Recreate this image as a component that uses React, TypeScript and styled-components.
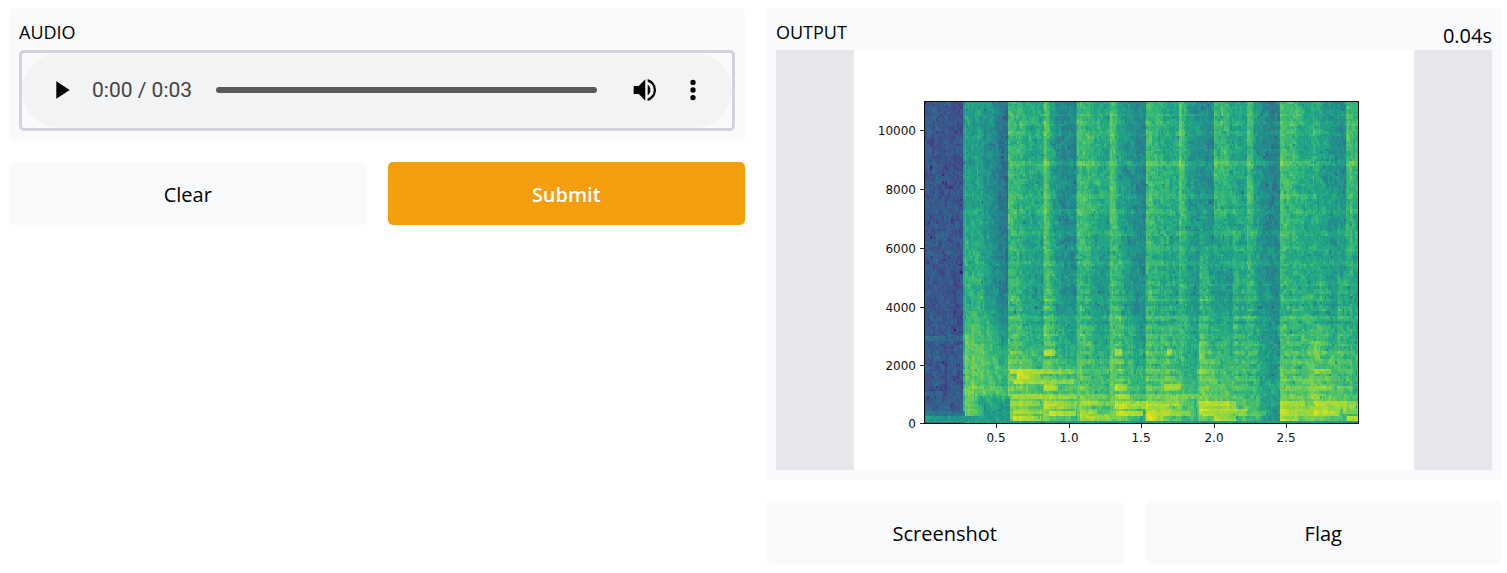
import React, { useState } from "react";
import styled, { createGlobalStyle } from "styled-components";

const GlobalStyle = createGlobalStyle`
  *, *::before, *::after { box-sizing: border-box; }
  body {
    margin: 0;
    background: #fff;
    color: #000;
    font-family: "Segoe UI", "Open Sans", "Noto Sans", sans-serif;
    font-size: 20px;
    line-height: 32px;
  }
`;

const Page = styled.main`
  display: grid;
  grid-template-columns: 1fr 1fr;
  align-items: start;
  gap: 21px;
  padding: 8px 5px 8px 9px;
`;

const Column = styled.div`
  display: flex;
  flex-direction: column;
  gap: 21px;
  min-width: 0;
`;

const Card = styled.section`
  padding: 10px;
  border-radius: 5px;
  background: #f9fafb;
`;

const CardHeader = styled.header`
  display: flex;
  justify-content: space-between;
  height: 32px;
`;

const CardTitle = styled.h2`
  margin: 0;
  font-size: 18px;
  font-weight: 500;
  line-height: 28px;
  text-transform: uppercase;
`;

const Duration = styled.span`
  font-size: 20px;
  line-height: 36px;
`;

const PlayerFrame = styled.div`
  border: 3px solid #d2d3dc;
  border-radius: 5px;
`;

const Player = styled.div`
  display: flex;
  align-items: center;
  height: 75px;
  padding: 0 15px 1px 17px;
  border-radius: 38px;
  background: #f1f3f4;
`;

const IconButton = styled.button`
  display: grid;
  place-items: center;
  flex: none;
  width: 48px;
  height: 48px;
  padding: 0;
  border: 0;
  background: none;
  color: #000;
  cursor: pointer;
`;

const Time = styled.span`
  flex: none;
  margin: 0 24px 0 5px;
  color: #444;
  font-family: Roboto, sans-serif;
  font-size: 21px;
`;

const Seek = styled.input`
  flex: 1;
  min-width: 0;
  height: 6px;
  margin: 0 24px 0 0;
  border-radius: 3px;
  appearance: none;
  background: #5a5a5a;
  cursor: pointer;

  &::-webkit-slider-thumb {
    appearance: none;
    width: 0;
    height: 0;
  }
`;

const ButtonRow = styled.div`
  display: grid;
  grid-template-columns: 1fr 1fr;
  gap: 21px;
`;

const ActionButton = styled.button<{ $primary?: boolean }>`
  height: 63px;
  padding: 2px 20px 0;
  border: 0;
  border-radius: 5px;
  background: ${(p) => (p.$primary ? "#f59e0b" : "#f9fafb")};
  color: ${(p) => (p.$primary ? "#fff" : "#000")};
  font-family: inherit;
  font-size: 20px;
  font-weight: ${(p) => (p.$primary ? 600 : 500)};
  line-height: 32px;
  cursor: pointer;
`;

const Figure = styled.figure`
  display: flex;
  justify-content: center;
  margin: 0;
  background: #e5e7eb;
`;

const Plot = styled.svg`
  display: block;
  width: 560px;
  max-width: 100%;
  height: auto;
  background: #fff;
  font-family: "DejaVu Sans", sans-serif;
  font-size: 12px;
`;

/* ---------- spectrogram ---------- */

const W = 434;
const H = 323;
const COLS = 289;
const ROWS = 129;
const LEVELS = 48;

const VIRIDIS = [
  [68, 1, 84],
  [72, 36, 117],
  [65, 68, 135],
  [53, 95, 141],
  [42, 120, 142],
  [33, 145, 140],
  [34, 168, 132],
  [68, 191, 112],
  [122, 209, 81],
  [189, 223, 38],
  [253, 231, 37],
];

const viridis = (v: number) => {
  const p = Math.min(9.999, Math.max(0, v * 10));
  const i = Math.floor(p);
  const c = VIRIDIS[i].map((a, k) => Math.round(a + (VIRIDIS[i + 1][k] - a) * (p - i)));
  return `rgb(${c.join(",")})`;
};

type Stop = [number, number];

const ramp = (stops: Stop[], x: number) => {
  for (let i = 1; i < stops.length; i++) {
    if (x < stops[i][0]) {
      const [x0, a] = stops[i - 1];
      const [x1, b] = stops[i];
      return a + ((b - a) * (x - x0)) / (x1 - x0);
    }
  }
  return stops[stops.length - 1][1];
};

// Energy along time for the top, middle and bottom of the frequency range.
const TOP: Stop[] = [
  [0, 0.29], [25, 0.27], [39, 0.26], [40, 0.62], [43, 0.57], [50, 0.55], [53, 0.61], [57, 0.56],
  [68, 0.48], [76, 0.41], [84, 0.35], [84.1, 0.7], [92, 0.66], [104, 0.61], [119, 0.58], [120, 0.75],
  [123, 0.7], [127, 0.57], [134, 0.49], [152, 0.43], [153, 0.71], [162, 0.66], [174, 0.61], [185, 0.58],
  [186, 0.74], [191, 0.7], [194, 0.57], [205, 0.51], [222, 0.43], [223, 0.7], [232, 0.66], [242, 0.61],
  [255, 0.58], [256, 0.75], [260, 0.68], [264, 0.55], [274, 0.51], [289, 0.44], [290, 0.7], [298, 0.65],
  [309, 0.61], [322, 0.57], [323, 0.73], [328, 0.68], [331, 0.55], [340, 0.48], [355, 0.42], [356, 0.73],
  [365, 0.68], [376, 0.62], [388, 0.57], [389, 0.65], [393, 0.61], [400, 0.54], [422, 0.48], [423, 0.73],
  [427, 0.68], [434, 0.64],
];
const MIDDLE: Stop[] = [
  [0, 0.28], [39, 0.26], [40, 0.69], [44, 0.63], [53, 0.66], [62, 0.57], [72, 0.48], [84, 0.43],
  [85, 0.69], [94, 0.66], [98, 0.59], [119, 0.54], [120, 0.72], [126, 0.66], [134, 0.54], [152, 0.49],
  [153, 0.68], [164, 0.63], [168, 0.56], [185, 0.52], [186, 0.7], [196, 0.65], [201, 0.54], [221, 0.48],
  [223, 0.66], [233, 0.62], [255, 0.56], [256, 0.67], [261, 0.61], [264, 0.55], [275, 0.52], [276, 0.65],
  [284, 0.62], [288, 0.55], [308, 0.52], [310, 0.63], [322, 0.6], [323, 0.67], [330, 0.62], [334, 0.52],
  [340, 0.5], [355, 0.47], [356, 0.65], [372, 0.61], [390, 0.6], [398, 0.62], [408, 0.53], [413, 0.54],
  [414, 0.62], [434, 0.59],
];
const BOTTOM: Stop[] = [
  [0, 0.28], [39, 0.27], [40, 0.76], [53, 0.74], [70, 0.68], [84, 0.64], [85, 0.77], [98, 0.76],
  [118, 0.69], [120, 0.79], [134, 0.73], [153, 0.66], [154, 0.77], [168, 0.71], [185, 0.65], [186, 0.79],
  [202, 0.73], [221, 0.62], [223, 0.77], [238, 0.72], [242, 0.76], [256, 0.71], [273, 0.62], [275, 0.79],
  [290, 0.73], [322, 0.69], [331, 0.69], [340, 0.59], [355, 0.54], [356, 0.77], [376, 0.74], [391, 0.79],
  [406, 0.74], [434, 0.68],
];

// Faint tones that run across the whole clip: [y, thickness, gain].
const TONES = [
  [14, 3, 0.04], [22, 3, 0.03], [32, 4, 0.03], [62, 4, 0.07], [94, 4, 0.04], [109, 4, 0.04],
  [132, 3, 0.04], [147, 3, 0.03], [163, 4, 0.04], [184, 3, 0.03], [199, 4, 0.03], [218, 4, 0.03],
  [229, 3, 0.04],
];

// Attacks whose harmonics show as short stripes: [start, end].
const HARMONICS = [
  [86, 98], [120, 133], [156, 166], [190, 201], [223, 236], [241, 252], [275, 286], [310, 321],
  [325, 333], [360, 379], [391, 407], [413, 427],
];

// Strong notes: [x0, x1, y0, y1, level at start, level at end].
const NOTES = [
  [86, 150, 267, 274, 0.92, 0.79], [150, 222, 268, 273, 0.76, 0.71], [93, 116, 272, 280, 0.92, 0.8],
  [90, 150, 279, 284, 0.91, 0.8], [150, 222, 279, 283, 0.76, 0.7],
  [89, 150, 294, 298, 0.91, 0.85], [150, 222, 294, 298, 0.83, 0.76], [222, 310, 294, 298, 0.85, 0.77],
  [88, 115, 300, 306, 0.87, 0.82], [88, 118, 308, 314, 0.89, 0.83], [88, 120, 315, 321, 0.92, 0.8],
  [120, 134, 283, 290, 0.93, 0.85], [120, 130, 248, 256, 0.93, 0.84], [120, 156, 301, 308, 0.92, 0.81],
  [125, 152, 310, 316, 0.91, 0.86], [122, 145, 295, 298, 0.92, 0.9],
  [156, 186, 300, 306, 0.88, 0.78], [156, 172, 308, 320, 0.88, 0.83], [164, 192, 313, 320, 0.88, 0.81],
  [190, 198, 248, 256, 0.94, 0.84], [190, 202, 283, 290, 0.94, 0.85], [190, 223, 301, 308, 0.94, 0.84],
  [192, 220, 310, 316, 0.91, 0.85], [190, 206, 294, 298, 0.92, 0.88],
  [223, 258, 301, 308, 0.9, 0.85], [223, 240, 308, 321, 0.92, 0.85], [240, 268, 309, 316, 0.89, 0.77],
  [241, 257, 283, 290, 0.89, 0.82], [243, 248, 248, 255, 0.89, 0.84], [241, 254, 269, 272, 0.81, 0.76],
  [275, 313, 300, 308, 0.91, 0.85], [275, 325, 307, 313, 0.93, 0.83], [280, 342, 311, 316, 0.89, 0.74],
  [290, 312, 316, 321, 0.91, 0.82], [275, 290, 268, 273, 0.9, 0.8], [275, 281, 240, 260, 0.82, 0.78],
  [356, 381, 300, 307, 0.88, 0.84], [356, 391, 307, 316, 0.91, 0.82], [356, 376, 316, 321, 0.93, 0.84],
  [362, 380, 269, 272, 0.81, 0.77], [391, 407, 267, 272, 0.89, 0.8], [391, 396, 240, 260, 0.81, 0.77],
  [391, 423, 300, 308, 0.9, 0.85], [391, 416, 308, 315, 0.93, 0.85], [419, 434, 300, 314, 0.84, 0.8],
  [424, 434, 315, 321, 0.92, 0.87],
];

const noiseSource = (seed: number) => {
  let s = seed;
  return () => {
    s = (s * 1664525 + 1013904223) >>> 0;
    return s / 4294967296;
  };
};

const buildSpectrogram = () => {
  const rand = noiseSource(90210);
  const cw = W / COLS;
  const ch = H / ROWS;
  const columnShift = Array.from({ length: COLS }, () => (rand() - 0.5) * 0.035);
  const above: number[] = Array(COLS).fill(0);
  const paths: string[] = Array(LEVELS).fill("");

  for (let r = 0; r < ROWS; r++) {
    const y = (r + 0.5) * ch;
    let drawn = 0;
    let last = -1;
    let previous = 0;
    for (let c = 0; c <= COLS; c++) {
      let level = -2;
      if (c < COLS) {
        const x = (c + 0.5) * cw;
        const mid = ramp(MIDDLE, x);
        const top = ramp(TOP, x);
        const bottom = ramp(BOTTOM, x);
        let v =
          y < 200
            ? ramp([[0, top], [80, top], [180, mid], [200, mid]], y)
            : ramp([[200, mid], [285, bottom], [323, bottom]], y);

        if (x < 40) {
          if (Math.abs(y - 238) < 3) v += 0.06;
          if (y > 290) v += 0.03;
          if (y > 311 && y < 320) v = y < 315 ? 0.38 : 0.52;
        } else if (x < 85) {
          if (y > 215 && y < 290) v += 0.05 * Math.sin(((y - 215) / 75) * Math.PI);
          if (y > 286 && y < 294) v += 0.05;
          if (y > 296) {
            const pulse = ramp([[40, 0.79], [50, 0.74], [60, 0.56], [85, 0.5]], x);
            const floor = ramp([[296, 0.62], [306, 0.52], [323, 0.52]], y);
            v = y < 316 ? Math.max(pulse, floor) : 0.53;
          }
        } else {
          for (const [ty, th, gain] of TONES) if (Math.abs(y - ty) < th / 2 + 0.5) v += gain;
          if (y > 165 && y < 298) {
            const wave = Math.cos(((y - 252) / 8.8) * Math.PI * 2);
            const strength = Math.min(1, (y - 165) / 40);
            v += wave * strength * (HARMONICS.some(([a, b]) => x >= a && x < b) ? 0.05 : 0.01);
          }
          if (y > 298 && y < 316 && x < 335) v += 0.03;
        }
        for (const [x0, x1, y0, y1, a, b] of NOTES) {
          if (x >= x0 && x < x1 && y >= y0 && y < y1) {
            const rim = Math.min(y - y0, y1 - y) < 1.5 ? 0.04 : 0;
            v = Math.max(v, a - rim + ((b - a) * (x - x0)) / (x1 - x0));
          }
        }
        if (y > 320.5) v = x < 40 ? 0.35 : 0.52;

        // Speckle smears slightly from its neighbours and has a tail of dark dips.
        const calm = v > 0.83 ? 0.5 : v > 0.7 ? 0.8 : 1;
        const grain = (rand() + rand() - 1) * 0.085;
        previous = previous * 0.3 + grain + above[c] * 0.3;
        above[c] = previous;
        v += (previous + columnShift[c]) * calm;
        if (rand() < 0.03) v -= rand() * 0.16 * calm;
        level = Math.min(LEVELS - 1, Math.max(0, Math.round(v * (LEVELS - 1))));
      }
      if (level !== last) {
        if (last >= 0) {
          const x0 = 70 + drawn * cw;
          const y0 = 51 + r * ch;
          const w = ((c - drawn) * cw).toFixed(2);
          paths[last] += `M${x0.toFixed(2)} ${y0.toFixed(2)}h${w}v${ch.toFixed(2)}h-${w}z`;
        }
        drawn = c;
        last = level;
      }
    }
  }
  return paths.map((d, i) => ({ d, fill: viridis(i / (LEVELS - 1)) })).filter((p) => p.d);
};

const CELLS = buildSpectrogram();

const X_TICKS = [
  { x: 142, label: "0.5" },
  { x: 215, label: "1.0" },
  { x: 287, label: "1.5" },
  { x: 360, label: "2.0" },
  { x: 432, label: "2.5" },
];
const Y_TICKS = [
  { y: 373, label: "0" },
  { y: 315, label: "2000" },
  { y: 257, label: "4000" },
  { y: 198, label: "6000" },
  { y: 139, label: "8000" },
  { y: 80, label: "10000" },
];

const Spectrogram = () => (
  <Plot viewBox="0 0 560 420" role="img" aria-label="Spectrogram">
    <rect x="70" y="51" width={W} height={H} fill={viridis(0.58)} />
    <g shapeRendering="crispEdges">
      {CELLS.map((p) => (
        <path key={p.fill} d={p.d} fill={p.fill} />
      ))}
    </g>
    <rect x="70.5" y="51.5" width="434" height="322" fill="none" stroke="#111" />
    {X_TICKS.map((t) => (
      <g key={t.label}>
        <path d={`M${t.x + 0.5} 374v4`} stroke="#222" />
        <text x={t.x} y="392" textAnchor="middle" fill="#111">
          {t.label}
        </text>
      </g>
    ))}
    {Y_TICKS.map((t) => (
      <g key={t.label}>
        <path d={`M66 ${t.y + 0.5}h4`} stroke="#222" />
        <text x="62" y={t.y + 5} textAnchor="end" fill="#111">
          {t.label}
        </text>
      </g>
    ))}
  </Plot>
);

/* ---------- player icons ---------- */

const PlayIcon = () => (
  <svg width="32" height="32" viewBox="0 0 24 24" fill="currentColor" aria-hidden="true">
    <path d="M7 5.5v13l10-6.5z" />
  </svg>
);

const VolumeIcon = () => (
  <svg width="32" height="32" viewBox="0 0 24 24" fill="currentColor" aria-hidden="true">
    <path d="M3.5 9v6h3.8l4.9 5V4L7.3 9H3.5zm12.5 3A4.5 4.5 0 0 0 14 7.97v8.05A4.48 4.48 0 0 0 16 12zM14 3.8v2a6.5 6.5 0 0 1 0 12.4v2a8.5 8.5 0 0 0 0-16.4z" />
  </svg>
);

const MoreIcon = () => (
  <svg width="32" height="32" viewBox="0 0 24 24" fill="currentColor" aria-hidden="true">
    <path d="M12 8.3a2 2 0 1 0 0-4 2 2 0 0 0 0 4zm0 1.7a2 2 0 1 0 0 4 2 2 0 0 0 0-4zm0 5.7a2 2 0 1 0 0 4 2 2 0 0 0 0-4z" />
  </svg>
);

export default function App() {
  const [position, setPosition] = useState(0);

  return (
    <>
      <GlobalStyle />
      <Page>
        <Column>
          <Card>
            <CardHeader>
              <CardTitle>Audio</CardTitle>
            </CardHeader>
            <PlayerFrame>
              <Player>
                <IconButton type="button" aria-label="Play">
                  <PlayIcon />
                </IconButton>
                <Time>0:0{position} / 0:03</Time>
                <Seek
                  type="range"
                  min={0}
                  max={3}
                  value={position}
                  aria-label="Seek"
                  onChange={(e) => setPosition(Number(e.target.value))}
                />
                <IconButton type="button" aria-label="Mute">
                  <VolumeIcon />
                </IconButton>
                <IconButton type="button" aria-label="More options">
                  <MoreIcon />
                </IconButton>
              </Player>
            </PlayerFrame>
          </Card>
          <ButtonRow>
            <ActionButton type="button">Clear</ActionButton>
            <ActionButton type="button" $primary>
              Submit
            </ActionButton>
          </ButtonRow>
        </Column>
        <Column>
          <Card>
            <CardHeader>
              <CardTitle>Output</CardTitle>
              <Duration>0.04s</Duration>
            </CardHeader>
            <Figure>
              <Spectrogram />
            </Figure>
          </Card>
          <ButtonRow>
            <ActionButton type="button">Screenshot</ActionButton>
            <ActionButton type="button">Flag</ActionButton>
          </ButtonRow>
        </Column>
      </Page>
    </>
  );
}
